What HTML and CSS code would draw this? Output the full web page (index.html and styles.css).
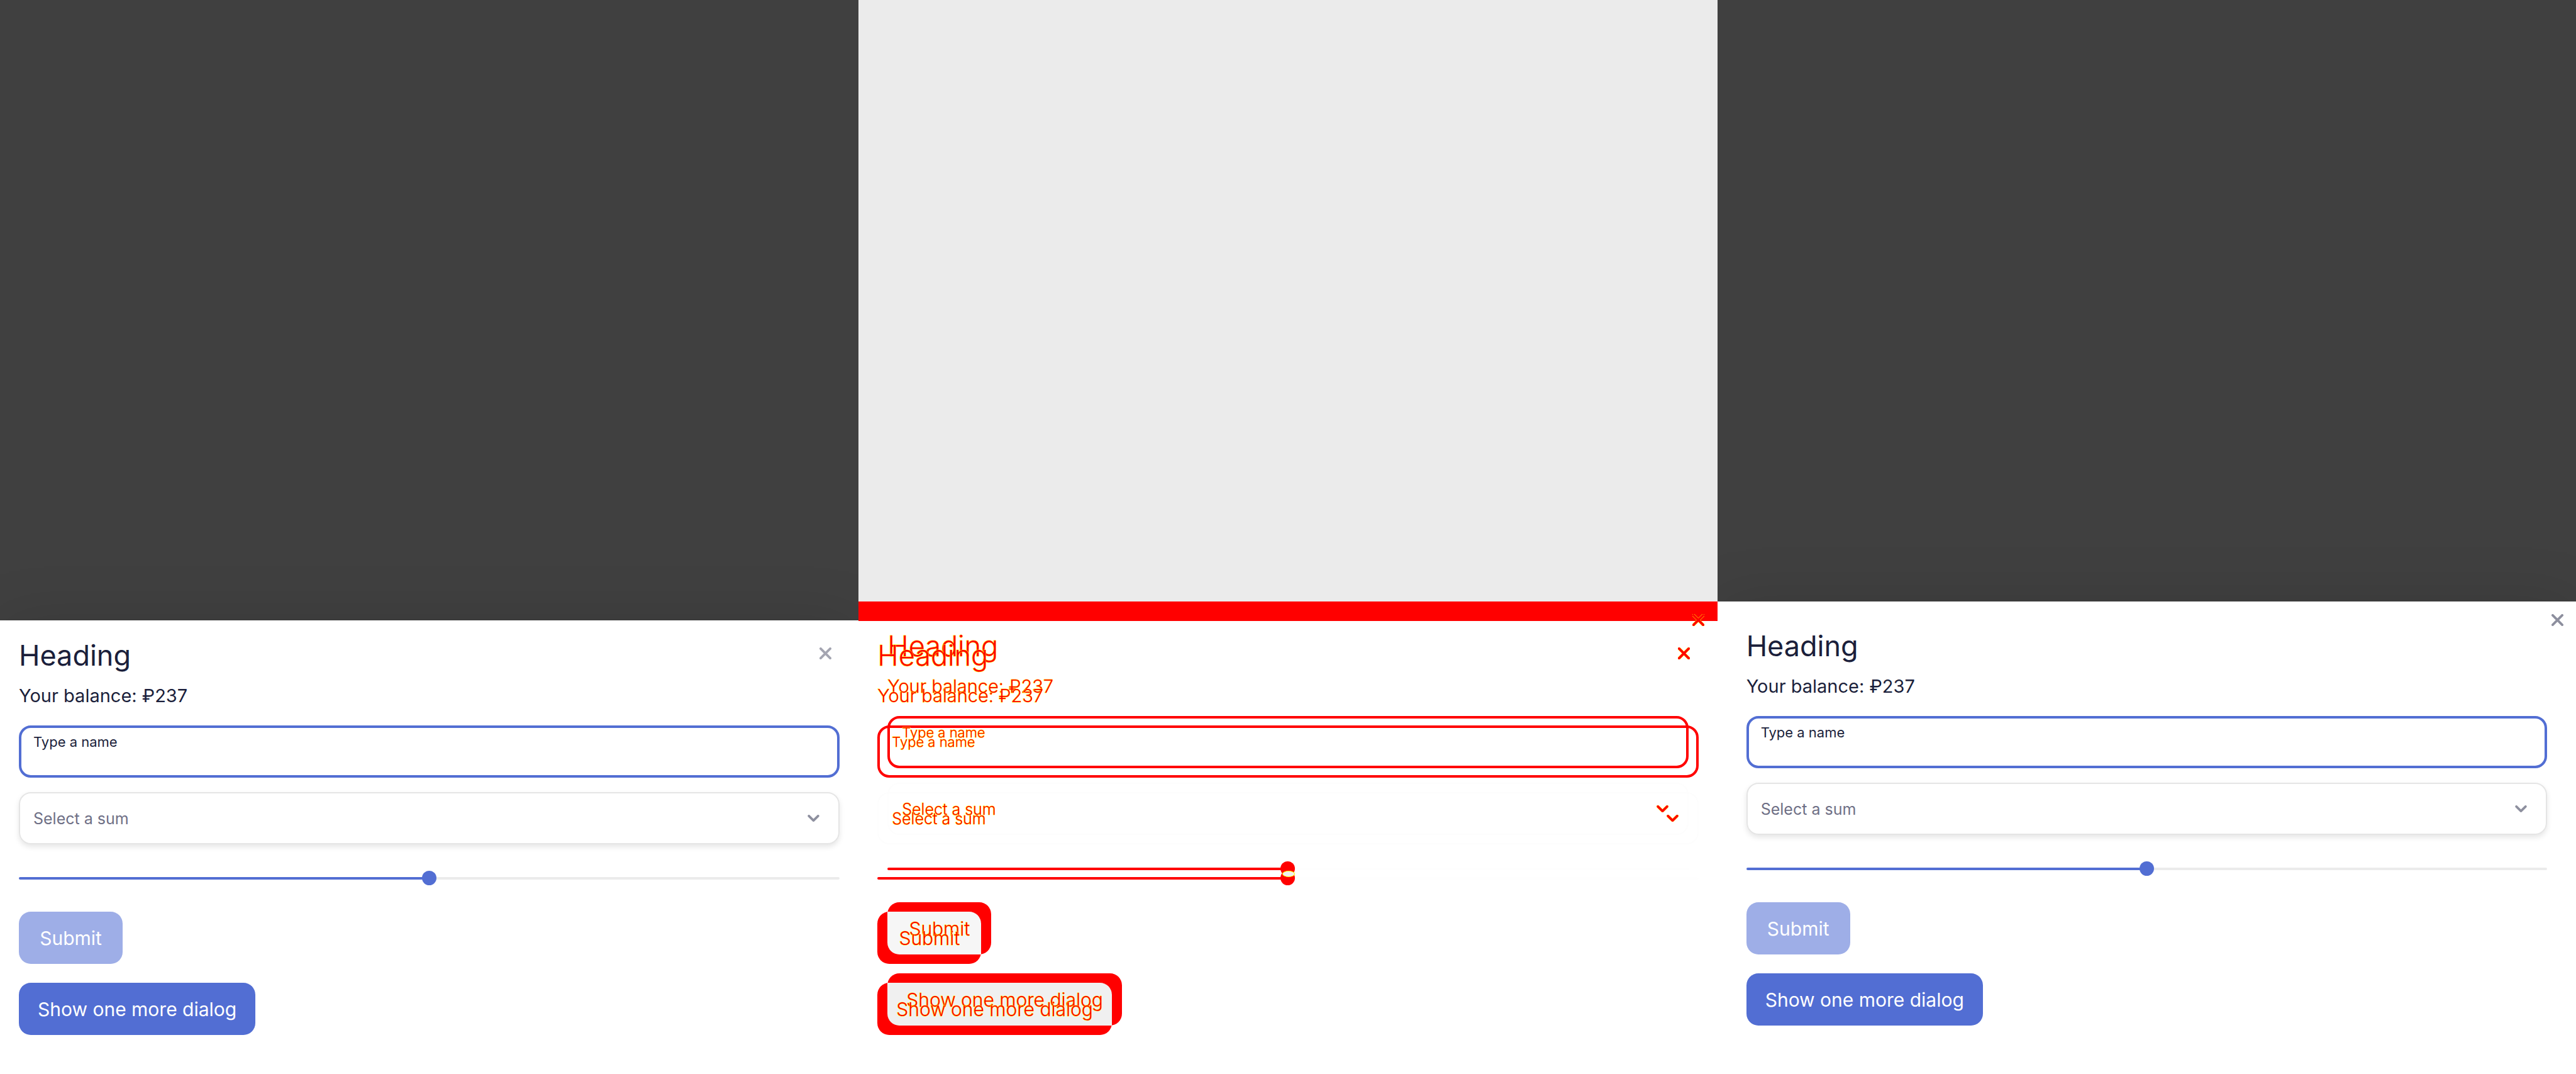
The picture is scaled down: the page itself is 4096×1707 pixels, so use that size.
FILE: index.html
```html
<!DOCTYPE html>
<html lang="en">
<head>
<meta charset="utf-8">
<title>Dialog comparison</title>
<link rel="stylesheet" href="styles.css">
</head>
<body>
<svg class="defs" aria-hidden="true">
  <symbol id="cross" viewBox="0 0 20 20"><path d="M2 2L18 18M18 2L2 18"/></symbol>
  <symbol id="chevron" viewBox="0 0 20 12"><path d="M2 2L10 10L18 2"/></symbol>
</svg>
<main class="compare">
  <section class="pane">
    <form class="sheet sheet-inner">
      <button class="close" type="button" aria-label="Close"><svg class="icon"><use class="mark" href="#cross"/></svg></button>
      <h2 class="title"><span class="ink">Heading</span></h2>
      <p class="balance"><span class="ink">Your balance: ₽237</span></p>
      <div class="field"><label class="label ink" for="name-a">Type a name</label><input class="text" id="name-a" type="text"></div>
      <div class="picker"><select class="select ink" aria-label="Sum"><option>Select a sum</option></select><svg class="chevron"><use class="mark" href="#chevron"/></svg></div>
      <div class="slider"><input class="range" type="range" aria-label="Sum slider" value="50"></div>
      <button class="button" type="submit" disabled><span class="ink">Submit</span></button>
      <button class="button" type="button"><span class="ink">Show one more dialog</span></button>
    </form>
  </section>

  <section class="pane diff">
    <form class="sheet sheet-outer">
      <button class="close" type="button" aria-label="Close"><svg class="icon"><use class="edge" href="#cross"/><use class="mark" href="#cross"/></svg></button>
      <h2 class="title"><span class="ink">Heading</span></h2>
      <p class="balance"><span class="ink">Your balance: ₽237</span></p>
      <div class="field"><label class="label ink" for="name-b">Type a name</label><input class="text" id="name-b" type="text"></div>
      <div class="picker"><select class="select ink" aria-label="Sum"><option>Select a sum</option></select><svg class="chevron"><use class="edge" href="#chevron"/><use class="mark" href="#chevron"/></svg></div>
      <div class="slider"><input class="range" type="range" aria-label="Sum slider" value="50"></div>
      <button class="button" type="submit" disabled><span class="ink">Submit</span></button>
      <button class="button" type="button"><span class="ink">Show one more dialog</span></button>
    </form>
    <form class="sheet sheet-inner">
      <button class="close" type="button" aria-label="Close"><svg class="icon"><use class="edge" href="#cross"/><use class="mark" href="#cross"/></svg></button>
      <h2 class="title"><span class="ink">Heading</span></h2>
      <p class="balance"><span class="ink">Your balance: ₽237</span></p>
      <div class="field"><label class="label ink" for="name-c">Type a name</label><input class="text" id="name-c" type="text"></div>
      <div class="picker"><select class="select ink" aria-label="Sum"><option>Select a sum</option></select><svg class="chevron"><use class="edge" href="#chevron"/><use class="mark" href="#chevron"/></svg></div>
      <div class="slider"><input class="range" type="range" aria-label="Sum slider" value="50"></div>
      <button class="button" type="submit" disabled><span class="ink">Submit</span></button>
      <button class="button" type="button"><span class="ink">Show one more dialog</span></button>
    </form>
  </section>

  <section class="pane">
    <form class="sheet sheet-outer">
      <button class="close" type="button" aria-label="Close"><svg class="icon"><use class="mark" href="#cross"/></svg></button>
      <h2 class="title"><span class="ink">Heading</span></h2>
      <p class="balance"><span class="ink">Your balance: ₽237</span></p>
      <div class="field"><label class="label ink" for="name-d">Type a name</label><input class="text" id="name-d" type="text"></div>
      <div class="picker"><select class="select ink" aria-label="Sum"><option>Select a sum</option></select><svg class="chevron"><use class="mark" href="#chevron"/></svg></div>
      <div class="slider"><input class="range" type="range" aria-label="Sum slider" value="50"></div>
      <button class="button" type="submit" disabled><span class="ink">Submit</span></button>
      <button class="button" type="button"><span class="ink">Show one more dialog</span></button>
    </form>
  </section>
</main>
</body>
</html>
```
FILE: styles.css
```css
* { box-sizing: border-box; }
body { margin: 0; font-family: Inter, sans-serif; color: #1b1f3b; background: #fff; }
.defs { position: absolute; width: 0; height: 0; }

.compare { display: grid; grid-template-columns: repeat(3, 1fr); min-height: 100vh; }
.pane { position: relative; display: grid; align-items: end; overflow: hidden; background: #404040; }

.sheet {
  grid-area: 1 / 1;
  position: relative;
  display: flex;
  flex-direction: column;
  align-items: flex-start;
  background: #fff;
  box-shadow: 0 0 90px rgba(0, 0, 0, .12);
}
.sheet-inner { padding: 28px 30px 62px; }
.sheet-outer { padding: 43px 46px 77px; }

.title { margin: 0 0 14px; font-size: 45px; line-height: 56px; font-weight: 400; }
.balance { margin: 0 0 25px; font-size: 29px; line-height: 44px; }

.close {
  position: absolute;
  top: 29px;
  right: 30px;
  width: 46px;
  height: 46px;
  padding: 0;
  border: 0;
  background: none;
  color: #a4a5b1;
}
.sheet-outer .close { top: 6px; right: 7px; color: #8d8f9e; }
.icon, .chevron { display: block; overflow: visible; fill: none; stroke: currentColor; stroke-width: 4; stroke-linecap: round; stroke-linejoin: round; }
.icon { width: 19px; height: 19px; margin: auto; }

.field { width: 100%; height: 83px; margin-bottom: 23px; padding: 10px 19px 0; border: 4px solid #526ed3; border-radius: 19px; display: flex; flex-direction: column; }
.label { font-size: 22px; line-height: 24px; }
.text { width: 100%; height: 32px; padding: 0; border: 0; outline: 0; background: none; font: inherit; }

.picker { position: relative; width: 100%; height: 83px; margin-bottom: 42px; border: 2px solid #e5e5e5; border-radius: 19px; box-shadow: 0 4px 8px rgba(0, 0, 0, .1); }
.select { width: 100%; height: 79px; padding: 0 21px; border: 0; background: none; appearance: none; font: 25px Inter, sans-serif; color: #6f7086; }
.chevron { position: absolute; right: 30px; top: 34px; width: 19px; height: 11px; color: #8d8f9e; }

.slider { position: relative; width: 100%; height: 23px; margin-bottom: 42px; }
.range { display: block; width: 100%; height: 23px; margin: 0; appearance: none; background: none; }
.range::-webkit-slider-runnable-track { height: 4px; border-radius: 2px; background: linear-gradient(90deg, #526ed3 50%, #ebebeb 50%); }
.range::-webkit-slider-thumb { appearance: none; width: 23px; height: 23px; margin-top: -10px; border-radius: 50%; background: #526ed3; }

.button { min-width: 165px; height: 83px; padding: 0 30px; border: 0; border-radius: 19px; background: #526ed3; color: #fff; font: 30px Inter, sans-serif; }
.button:disabled { margin-bottom: 30px; background: #9eaee7; }

/* Difference pane: both sheets overlaid, changed pixels in red with a yellow fringe. */
.diff { background: #ebebeb; }
.diff .sheet { box-shadow: none; color: #f00; }
.diff .sheet-outer { background: linear-gradient(#f00 31px, #fff 31px); }
.diff .sheet-inner { background: none; }
.diff .ink { position: relative; z-index: 2; color: #f00; font-weight: 300; -webkit-text-stroke: 1px #ff0; paint-order: stroke fill; }
.diff .close, .diff .sheet-outer .close { color: #f00; }
.diff .chevron { color: #f00; }
.edge { stroke: #ff0; stroke-width: 5; }
.diff .field { border-color: #f00; }
.diff .picker { border-color: #fdfdfd; box-shadow: none; }
.diff .range::-webkit-slider-runnable-track { background: linear-gradient(90deg, #f00 50%, #fefefe 50%); }
.diff .range::-webkit-slider-thumb { background: #f00; }
.diff .sheet-inner .slider::after {
  content: "";
  position: absolute;
  top: 0;
  left: calc(50% - 9px);
  width: 18px;
  height: 8px;
  border: 1px solid #ff0;
  border-radius: 50%;
  background: #f0f0f0;
}
.diff .button { position: relative; background: #f00; }
.diff .sheet-outer .button::before {
  content: "";
  position: absolute;
  z-index: 1;
  inset: 15px 16px 0 0;
  border-radius: 0 19px 0 19px;
  background: #f0f0f0;
}
.diff .sheet-outer .button:disabled::before { background: #f6f6f6; }
```
